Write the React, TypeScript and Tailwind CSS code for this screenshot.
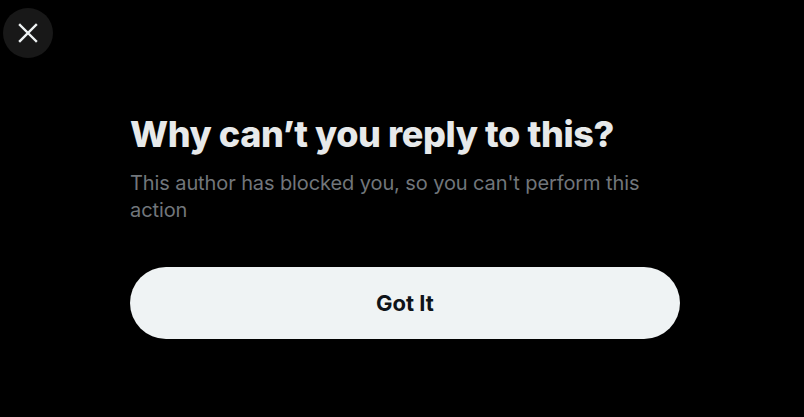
export default function App() {
  return (
    <div
      className="relative w-[804px] h-[417px] bg-black overflow-hidden"
      style={{ fontFamily: 'Inter, "Noto Sans", sans-serif' }}
    >
      {/* 닫기 버튼 */}
      <button className="absolute left-[3px] top-[8px] w-[50px] h-[50px] rounded-full bg-[#181818] flex items-center justify-center">
        <svg width="20" height="20" viewBox="0 0 20 20" className="text-[#eff3f4]">
          <path d="M2 2 L18 18 M18 2 L2 18" stroke="currentColor" strokeWidth="2.4" strokeLinecap="square" fill="none" />
        </svg>
      </button>

      {/* 본문 */}
      <div className="flex flex-col pl-[130px] pt-[110px] w-[680px]">
        <h1 className="text-[36px] leading-[48px] font-extrabold text-[#e7e9ea] tracking-[-0.4px]">
          Why can’t you reply to this?
        </h1>
        <p className="mt-[12px] text-[20px] leading-[27px] text-[#71767b] tracking-[-0.1px]">
          This author has blocked you, so you can't perform this action
        </p>
        <button className="mt-[43px] h-[72px] w-[550px] rounded-full bg-[#eff3f4] text-[#0f1419] text-[22px] font-bold">
          Got It
        </button>
      </div>
    </div>
  );
}
